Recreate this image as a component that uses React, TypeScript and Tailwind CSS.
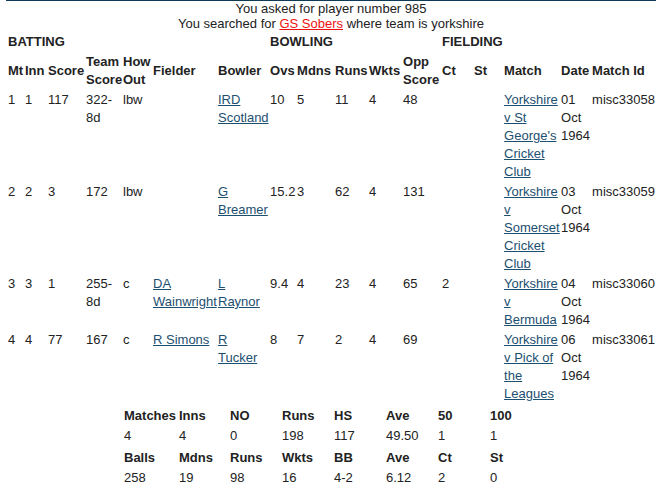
import React from "react";

const L = ({ children }: { children: React.ReactNode }) => (
  <a href="#" className="text-[#1c4f70] underline">
    {children}
  </a>
);

type Row = {
  mt: string; inn: string; score: string; team: string; how: string;
  fielder: string; bowler: string; ovs: string; mdns: string; runs: string;
  wkts: string; opp: string; ct: string; st: string; match: string; date: string; id: string;
};

const rows: Row[] = [
  { mt: "1", inn: "1", score: "117", team: "322-8d", how: "lbw", fielder: "", bowler: "IRD Scotland", ovs: "10", mdns: "5", runs: "11", wkts: "4", opp: "48", ct: "", st: "", match: "Yorkshire v St George's Cricket Club", date: "01 Oct 1964", id: "misc33058" },
  { mt: "2", inn: "2", score: "3", team: "172", how: "lbw", fielder: "", bowler: "G Breamer", ovs: "15.2", mdns: "3", runs: "62", wkts: "4", opp: "131", ct: "", st: "", match: "Yorkshire v Somerset Cricket Club", date: "03 Oct 1964", id: "misc33059" },
  { mt: "3", inn: "3", score: "1", team: "255-8d", how: "c", fielder: "DA Wainwright", bowler: "L Raynor", ovs: "9.4", mdns: "4", runs: "23", wkts: "4", opp: "65", ct: "2", st: "", match: "Yorkshire v Bermuda", date: "04 Oct 1964", id: "misc33060" },
  { mt: "4", inn: "4", score: "77", team: "167", how: "c", fielder: "R Simons", bowler: "R Tucker", ovs: "8", mdns: "7", runs: "2", wkts: "4", opp: "69", ct: "", st: "", match: "Yorkshire v Pick of the Leagues", date: "06 Oct 1964", id: "misc33061" },
];

const widths = [
  "w-[17px]", "w-[23px]", "w-[38px]", "w-[37px]", "w-[30px]", "w-[65px]", "w-[52px]",
  "w-[27px]", "w-[38px]", "w-[34px]", "w-[34px]", "w-[39px]", "w-[32px]", "w-[30px]",
  "w-[57px]", "w-[31px]", "w-[64px]",
];

const headers = ["Mt", "Inn", "Score", "Team Score", "How Out", "Fielder", "Bowler", "Ovs", "Mdns", "Runs", "Wkts", "Opp Score", "Ct", "St", "Match", "Date", "Match Id"];

const td = "p-0 pr-[1px] py-[1px] align-top text-left font-normal";
const th = "p-0 pr-[1px] py-[1px] align-middle text-left font-bold";

const sumCols = ["w-[55px]", "w-[51px]", "w-[52px]", "w-[52px]", "w-[52px]", "w-[52px]", "w-[52px]", "w-[52px]"];

export default function App() {
  return (
    <div className="w-[666px] h-[494px] bg-white text-[#222] text-[13px] font-['Liberation_Sans',Arial,sans-serif]">
      <div className="ml-[6px] w-[650px] border-t border-[#0f3a57]">
        <div className="text-center leading-[15px]">
          <div>You asked for player number 985</div>
          <div>
            You searched for{" "}
            <a href="#" className="text-[#ee1111] underline">GS Sobers</a> where team is yorkshire
          </div>
        </div>
        <table className="ml-[2px] mt-[1px] w-[648px] table-fixed border-collapse leading-[18px]">
          <colgroup>
            {widths.map((w, i) => (
              <col key={i} className={w} />
            ))}
          </colgroup>
          <tbody>
            <tr>
              <th colSpan={7} className={th}>BATTING</th>
              <th colSpan={5} className={th}>BOWLING</th>
              <th colSpan={5} className={th}>FIELDING</th>
            </tr>
            <tr>
              {headers.map((h, i) => (
                <th key={i} className={th}>{h}</th>
              ))}
            </tr>
            {rows.map((r, i) => (
              <tr key={i}>
                <td className={td}>{r.mt}</td>
                <td className={td}>{r.inn}</td>
                <td className={td}>{r.score}</td>
                <td className={td}>{r.team}</td>
                <td className={td}>{r.how}</td>
                <td className={td}>{r.fielder ? <L>{r.fielder}</L> : null}</td>
                <td className={td}><L>{r.bowler}</L></td>
                <td className={td}>{r.ovs}</td>
                <td className={td}>{r.mdns}</td>
                <td className={td}>{r.runs}</td>
                <td className={td}>{r.wkts}</td>
                <td className={td}>{r.opp}</td>
                <td className={td}>{r.ct}</td>
                <td className={td}>{r.st}</td>
                <td className={td}><L>{r.match}</L></td>
                <td className={td}>{r.date}</td>
                <td className={td}>{r.id}</td>
              </tr>
            ))}
          </tbody>
        </table>
        <table className="mx-auto mt-[2px] w-[418px] table-fixed border-collapse leading-[18px]">
          <colgroup>
            {sumCols.map((w, i) => (
              <col key={i} className={w} />
            ))}
          </colgroup>
          <tbody>
            <tr>
              {["Matches", "Inns", "NO", "Runs", "HS", "Ave", "50", "100"].map((h, i) => (
                <th key={i} className="p-0 pl-[2px] py-[1px] text-left font-bold">{h}</th>
              ))}
            </tr>
            <tr>
              {["4", "4", "0", "198", "117", "49.50", "1", "1"].map((v, i) => (
                <td key={i} className="p-0 pl-[2px] py-[1px] text-left">{v}</td>
              ))}
            </tr>
            <tr>
              {["Balls", "Mdns", "Runs", "Wkts", "BB", "Ave", "Ct", "St"].map((h, i) => (
                <th key={i} className="p-0 pl-[2px] pt-[3px] pb-[1px] text-left font-bold">{h}</th>
              ))}
            </tr>
            <tr>
              {["258", "19", "98", "16", "4-2", "6.12", "2", "0"].map((v, i) => (
                <td key={i} className="p-0 pl-[2px] py-[1px] text-left">{v}</td>
              ))}
            </tr>
          </tbody>
        </table>
      </div>
    </div>
  );
}
